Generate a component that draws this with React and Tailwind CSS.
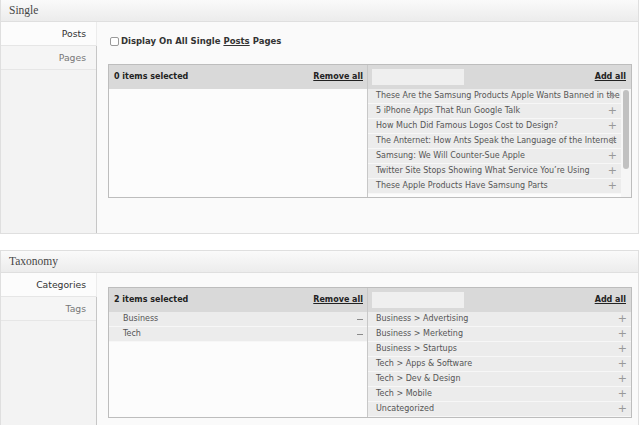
import React from 'react';

const posts = [
  "These Are the Samsung Products Apple Wants Banned in the US",
  "5 iPhone Apps That Run Google Talk",
  "How Much Did Famous Logos Cost to Design?",
  "The Anternet: How Ants Speak the Language of the Internet",
  "Samsung: We Will Counter-Sue Apple",
  "Twitter Site Stops Showing What Service You’re Using",
  "These Apple Products Have Samsung Parts"
];

const categories = [
  "Business > Advertising",
  "Business > Merketing",
  "Business > Startups",
  "Tech > Apps & Software",
  "Tech > Dev & Design",
  "Tech > Mobile",
  "Uncategorized"
];

const selectedCats = ["Business", "Tech"];

const Panel = ({ title, tabs, className = '', children }) => (
  <div className={`border border-[#dfdfdf] ${className}`}>
    {/* Panel title bar */}
    <div className="h-[22px] border-b border-[#dfdfdf] bg-linear-to-b from-[#fafafa] to-[#ececec] px-[8px] flex items-center">
      <h3 className="font-['Liberation_Serif',serif] text-[11.5px] text-[#464646]">{title}</h3>
    </div>
    <div className="flex">
      {/* Side tabs */}
      <div className="w-[96px] shrink-0 border-r border-[#c6c6c6] bg-[#f3f3f3]">
        {tabs.map((tab, i) => (
          <div
            key={tab}
            className={`h-[24px] flex items-center justify-end pr-[10px] border-b border-[#e6e6e6] text-[9.25px] ${
              i === 0 ? 'bg-[#fcfcfc] text-[#333] -mr-px border-r border-r-[#ececec]' : 'bg-[#f5f5f5] text-[#777]'
            }`}
          >
            {tab}
          </div>
        ))}
      </div>
      {/* Tab content */}
      <div className="flex-1 bg-[#fafafa] pl-[11px] pr-[6px]">{children}</div>
    </div>
  </div>
);

const ListBox = ({ count, selected, available, scroll }) => (
  <div className="flex border border-[#bdbdbd] bg-[#fcfcfc]">
    {/* Selected items */}
    <div className="flex-1 min-w-0 flex flex-col">
      <div className="h-[24px] bg-[#d9d9d9] flex items-center justify-between pl-[5px] pr-[4px] font-bold text-[8px] text-[#222]">
        <span>{count} items selected</span>
        <a className="underline">Remove all</a>
      </div>
      {selected.map(item => (
        <div key={item} className="relative h-[15px] border-b border-[#f7f7f7] bg-[#ececec] pl-[14px] flex items-center text-[8px] text-[#555]">
          {item}
          <span className="absolute right-[4px] top-[7px] w-[6px] h-px bg-[#8a8a8a]" />
        </div>
      ))}
    </div>
    {/* Available items */}
    <div className="w-[264px] shrink-0 border-l border-[#c8c8c8] flex flex-col">
      <div className="h-[24px] bg-[#d9d9d9] flex items-center justify-between pl-[4px] pr-[5px]">
        <div className="w-[92px] h-[16px] bg-[#efefef]" />
        <a className="underline font-bold text-[8px] text-[#222]">Add all</a>
      </div>
      <div className={`flex ${scroll ? 'h-[108px] overflow-hidden' : ''}`}>
        <div className="flex-1 min-w-0">
          {available.map(item => (
            <div key={item} className="relative h-[15px] border-b border-[#f7f7f7] bg-[#ececec] pl-[8px] flex items-center overflow-hidden whitespace-nowrap text-[8px] text-[#555]">
              {item}
              <span className="absolute right-[4px] top-0 h-[14px] flex items-center text-[11px] text-[#999]">+</span>
            </div>
          ))}
        </div>
        {scroll && (
          <div className="w-[10px] shrink-0 bg-[#f6f6f6]">
            <div className="ml-[2px] mt-[1px] w-[6px] h-[79px] rounded-full bg-[#c1c1c1]" />
          </div>
        )}
      </div>
    </div>
  </div>
);

export default function App() {
  return (
    <div className="bg-white w-[640px] h-[425px] overflow-hidden font-['DejaVu_Sans',sans-serif]">
      <div className="pr-px">
        <Panel title="Single" tabs={["Posts", "Pages"]} className="-mt-px">
          <div className="pt-[12px] pb-[35px]">
            <label className="h-[14px] mb-[16px] flex items-center gap-[2px] ml-[2px] font-bold text-[8.5px] text-[#333]">
              <span className="w-[9px] h-[9px] rounded-[2px] border border-[#999] bg-white" />
              <span>Display On All Single <span className="underline">Posts</span> Pages</span>
            </label>
            <ListBox count={0} selected={[]} available={posts} scroll />
          </div>
        </Panel>
        <Panel title="Taxonomy" tabs={["Categories", "Tags"]} className="mt-[16px]">
          <div className="pt-[14px] pb-[30px]">
            <ListBox count={2} selected={selectedCats} available={categories} />
          </div>
        </Panel>
      </div>
    </div>
  );
}
